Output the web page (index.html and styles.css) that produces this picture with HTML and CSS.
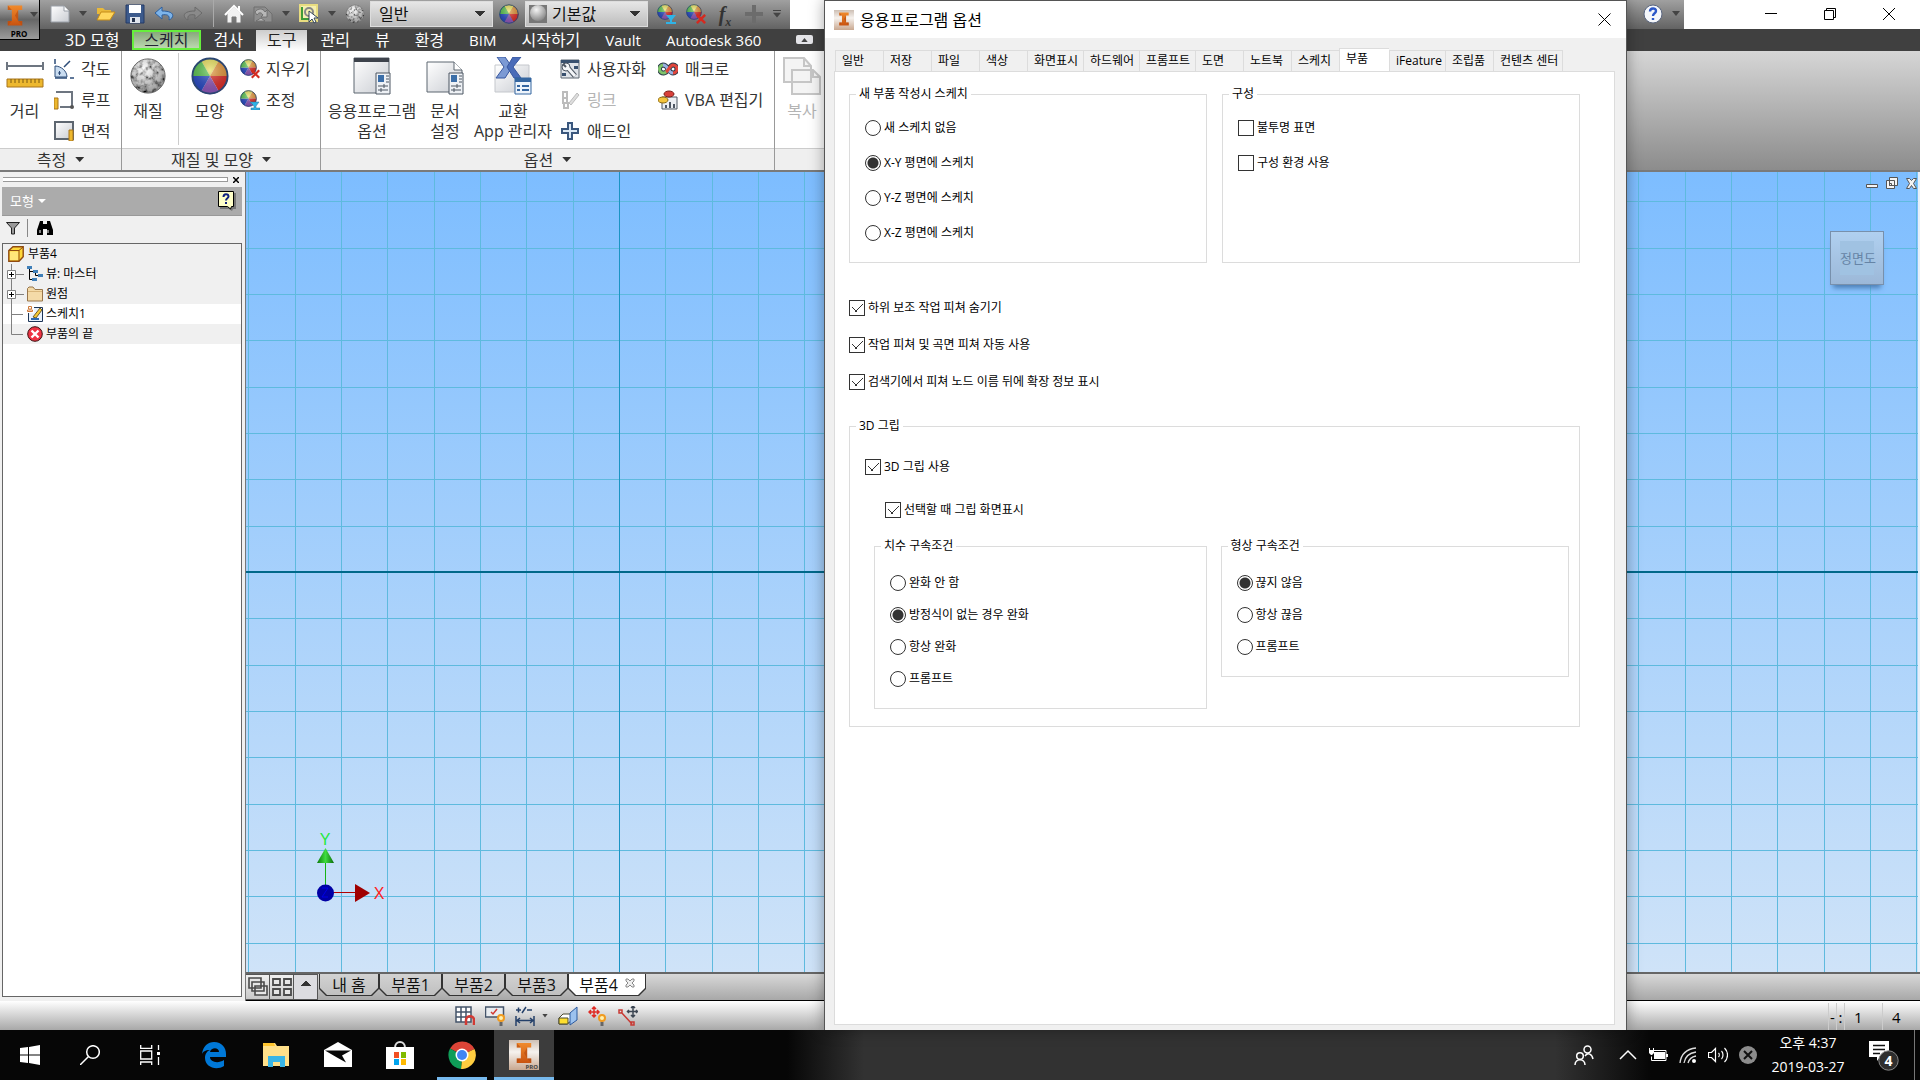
FILE: index.html
```html
<!DOCTYPE html>
<html lang="ko">
<head>
<meta charset="utf-8">
<title>응용프로그램 옵션</title>
<link rel="stylesheet" href="styles.css">
</head>
<body>
<svg class="defs" aria-hidden="true">
  <defs>
    <linearGradient id="page" x1="0" y1="0" x2="1" y2="1"><stop offset="0" stop-color="#fff"/><stop offset="1" stop-color="#c9ccd2"/></linearGradient>
    <linearGradient id="orange" x1="0" y1="0" x2="0" y2="1"><stop offset="0" stop-color="#f08a2c"/><stop offset="1" stop-color="#c9530f"/></linearGradient>
    <radialGradient id="gloss" cx="0.5" cy="0.35" r="0.65"><stop offset="0" stop-color="#fff" stop-opacity="0.35"/><stop offset="1" stop-color="#000" stop-opacity="0.12"/></radialGradient>
    <radialGradient id="ball" cx="0.4" cy="0.3" r="0.7"><stop offset="0" stop-color="#f4f4f4"/><stop offset="1" stop-color="#8a8a8a"/></radialGradient>
    <radialGradient id="shade" cx="0.4" cy="0.3" r="0.7"><stop offset="0" stop-color="#fff" stop-opacity="0.4"/><stop offset="1" stop-color="#000" stop-opacity="0.4"/></radialGradient>
    <linearGradient id="badge" x1="0" y1="0" x2="0" y2="1"><stop offset="0" stop-color="#cdbfb4"/><stop offset="0.4" stop-color="#f6f2ee"/><stop offset="1" stop-color="#c9a890"/></linearGradient>
    <linearGradient id="bevel" x1="0" y1="0" x2="1" y2="0"><stop offset="0" stop-color="#0a7a0a"/><stop offset="0.5" stop-color="#3fdc3f"/><stop offset="1" stop-color="#0a6a0a"/></linearGradient>
    <filter id="stone" x="0" y="0" width="1" height="1">
      <feTurbulence type="fractalNoise" baseFrequency="0.2" numOctaves="3" seed="4"/>
      <feColorMatrix values="2.4 0 0 0 -0.5  2.4 0 0 0 -0.5  2.4 0 0 0 -0.5  0 0 0 0 1"/>
      <feComposite in2="SourceGraphic" operator="in"/>
    </filter>
  </defs>
  <symbol id="wheel" viewBox="0 0 40 40">
    <path d="M20 20L10.500 3.500A19 19 0 0 1 29.500 3.500z" fill="#e8df5a"/>
    <path d="M20 20L29.500 3.500A19 19 0 0 1 39 20z" fill="#e29438"/>
    <path d="M20 20L39 20A19 19 0 0 1 29.500 36.500z" fill="#dc2a25"/>
    <path d="M20 20L29.500 36.500A19 19 0 0 1 10.500 36.500z" fill="#8d55b8"/>
    <path d="M20 20L10.500 36.500A19 19 0 0 1 1 20z" fill="#2648c4"/>
    <path d="M20 20L1 20A19 19 0 0 1 10.500 3.500z" fill="#58c14c"/>
    <circle cx="20" cy="20" r="18.500" fill="url(#gloss)" stroke="#2b4673" stroke-width="2"/>
  </symbol>
  <symbol id="rock" viewBox="0 0 40 40">
    <circle cx="20" cy="20" r="18" filter="url(#stone)"/>
    <circle cx="20" cy="20" r="18" fill="url(#shade)" stroke="#666"/>
  </symbol>
  <symbol id="ilogo" viewBox="0 0 20 24">
    <path d="M2 1H18V6H13.500V18H18V23H2V18H6.500V6H2z" fill="url(#orange)"/>
    <path d="M2 1l4.500 5H2zM18 23l-4.500-5H18zM13.500 6L10 12l3.500 6zM2 23l4.500-5H2z" fill="#b44a10" opacity="0.6"/>
  </symbol>
  <symbol id="cross" viewBox="0 0 12 12"><path d="M1 1L11 11M11 1L1 11" stroke="#d42a20" stroke-width="3"/></symbol>
</svg>

<main class="app">
  <header class="titlebar">
    <div class="quick">
      <button class="qi" aria-label="새로 만들기"><svg viewBox="0 0 20 20"><path d="M1 2h13l5 5v11H1z" fill="url(#page)" stroke="#9aa0a8"/><path d="M14 2v5h5" fill="#fff" stroke="#9aa0a8"/></svg></button>
      <button class="dd" aria-label="더 보기"></button>
      <button class="qi" aria-label="열기"><svg viewBox="0 0 20 20"><path d="M1 4h6l2 2h6v4H1z" fill="#e9b93a"/><path d="M1 16L5 8h14l-5 8z" fill="#ffd75e" stroke="#c58b16"/></svg></button>
      <button class="qi" aria-label="저장"><svg viewBox="0 0 20 20"><path d="M1 1h18v18H1z" fill="#3c5a8c" stroke="#243b66"/><path d="M4 1h12v8H4z" fill="#fff"/><path d="M5 13h10v6H5z" fill="#dfe4ec"/><path d="M7 14h3v4H7z" fill="#26334c"/></svg></button>
      <button class="qi" aria-label="실행 취소"><svg viewBox="0 0 20 20"><path d="M8 3L1 9l7 6v-4c5-1 8 0 7 5 5-2 7-9-7-9z" fill="#7db4ea" stroke="#2d5f9e"/></svg></button>
      <button class="qi" aria-label="다시 실행"><svg viewBox="0 0 20 20"><path d="M12 3l7 6-7 6v-4c-5-1-8 0-7 5-5-2-7-9 7-9z" fill="#8a8a8a" stroke="#6a6a6a"/></svg></button>
      <span class="qsep"></span>
      <button class="qi" aria-label="홈"><svg viewBox="0 0 20 20"><path d="M3 10v9h5v-6h4v6h5v-9l-7-7z" fill="#f2f2f2" stroke="#777"/><path d="M1 11l9-9 9 9M15 2v5" fill="none" stroke="#fff" stroke-width="2"/></svg></button>
      <button class="qi" aria-label="업데이트"><svg viewBox="0 0 20 20"><path d="M1 3h11l7 7v8H1z" fill="#8e8e8e" stroke="#6f6f6f"/><path d="M2 8c3-4 8-4 10 0l2-2v7H8l2-2c-2-3-4-3-6 0zM3 17l5-3 4 3z" fill="#b8b8b8" stroke="#666" stroke-width=".8"/></svg></button>
      <button class="dd" aria-label="더 보기"></button>
      <button class="qi" aria-label="선택"><svg viewBox="0 0 20 20"><path d="M1 1h17v16H1z" fill="#f5efb0" stroke="#e8dc80" stroke-width="2"/><path d="M3 3v12h12" fill="none" stroke="#3f9b38" stroke-width="2"/><circle cx="10" cy="8" r="4" fill="none" stroke="#888" stroke-width="2"/><path d="M10 7v11l3-3 2 4 2-1-2-4h4z" fill="#fff" stroke="#345"/></svg></button>
      <button class="dd" aria-label="더 보기"></button>
      <button class="qi" aria-label="재질"><svg><use href="#rock"/></svg></button>
    </div>
    <div class="quick quick-styles">
      <select class="combo" aria-label="재질"><option>일반</option></select>
      <button class="qi" aria-label="모양"><svg><use href="#wheel"/></svg></button>
      <div class="combo-wrap"><select class="combo combo-icon" aria-label="모양"><option>기본값</option></select><svg class="combo-ball" viewBox="0 0 18 18"><path d="M0 0h18v18H0z" fill="#777"/><circle cx="9" cy="8" r="8" fill="url(#ball)"/></svg></div>
    </div>
    <div class="quick quick-end">
      <button class="qi" aria-label="조정"><svg viewBox="0 0 20 20"><use href="#wheel" width="16" height="16"/><path d="M9 11h10l-4 5v2h4v2H9v-2h4v-2z" fill="#2fb3e6"/></svg></button>
      <button class="qi" aria-label="지우기"><svg viewBox="0 0 20 20"><use href="#wheel" width="16" height="16"/><use href="#cross" x="10" y="10" width="10" height="10"/></svg></button>
      <button class="qi fx" aria-label="매개변수">f<sub>x</sub></button>
      <button class="qi" aria-label="추가"><svg viewBox="0 0 20 20"><path d="M8 1h4v7h7v4h-7v7H8v-7H1V8h7z" fill="#6c6c6c"/></svg></button>
      <button class="dd dd-bar" aria-label="사용자화"></button>
    </div>
    <div class="help">
      <svg class="qi" viewBox="0 0 20 20"><circle cx="10" cy="10" r="9" fill="#f4f6fa" stroke="#5a6680"/><path d="M7 7.500c0-4 6-4 6-.5 0 2.500-3 2-3 5M10 14v2" fill="none" stroke="#2b57c8" stroke-width="2.400"/></svg>
      <span class="dd"></span>
    </div>
    <div class="win">
      <button aria-label="최소화"><svg viewBox="0 0 12 12"><path d="M0 5.500h12" stroke="#000"/></svg></button>
      <button aria-label="이전 크기로"><svg viewBox="0 0 12 12"><path d="M.5 2.500h9v9h-9zM2.500 2.500v-2h9v9h-2" fill="none" stroke="#000"/></svg></button>
      <button aria-label="닫기"><svg viewBox="0 0 12 12"><path d="M0 0l12 12M12 0L0 12" stroke="#000"/></svg></button>
    </div>
  </header>

  <button class="appmenu" aria-label="Inventor">
    <svg class="applogo"><use href="#ilogo"/></svg><span class="dd"></span><span class="pro">PRO</span>
  </button>

  <nav class="menu">
    <a href="#">3D 모형</a><a href="#" class="ctx">스케치</a><a href="#">검사</a><a href="#" class="on">도구</a><a href="#">관리</a><a href="#">뷰</a><a href="#">환경</a><a href="#" class="lat">BIM</a><a href="#">시작하기</a><a href="#" class="lat">Vault</a><a href="#" class="lat">Autodesk 360</a>
    <button class="fold" aria-label="리본 최소화"><svg viewBox="0 0 8 5"><path d="M0 5l4-5 4 5z" fill="#444"/></svg></button>
  </nav>

  <section class="ribbon">
    <div class="panel p-measure">
      <div class="tools">
        <button class="big"><svg viewBox="0 0 38 38"><path d="M1 9h36M1 5v8M37 5v8" stroke="#6d7580" stroke-width="2"/><path d="M1 22h36v8H1z" fill="#edb82e" stroke="#a8741a"/><path d="M5 22v4m4-4v4m4-4v4m4-4v4m4-4v4m4-4v4m4-4v4m4-4v4" stroke="#7d5a10"/></svg>거리</button>
        <div class="col">
          <button class="row"><svg viewBox="0 0 20 20"><path d="M1 7c6 0 12 5 12 11H1z" fill="#c9dcf0" stroke="#2d4c78"/><path d="M1 0v5M10 8l6-6M16 19h4M1 19h12" fill="none" stroke="#2d4c78" stroke-width="1.500"/><path d="M4 14h3M5.500 12v4" stroke="#2d4c78"/></svg>각도</button>
          <button class="row"><svg viewBox="0 0 20 20"><path d="M2 2h16v15H6" fill="none" stroke="#6d7580" stroke-width="2"/><path d="M0 8h4v11H0z" fill="#edb82e" stroke="#a8741a"/><circle cx="18" cy="17" r="2" fill="#555"/></svg>루프</button>
          <button class="row"><svg viewBox="0 0 20 20"><path d="M1 1h18v17H1z" fill="url(#page)" stroke="#5d6670" stroke-width="2"/><path d="M15 9h4v11h-4z" fill="#edb82e" stroke="#a8741a"/></svg>면적</button>
        </div>
      </div>
      <div class="foot">측정<i></i></div>
    </div>
    <div class="panel p-material">
      <div class="tools">
        <button class="big"><svg><use href="#rock"/></svg>재질</button>
        <span class="bar"></span>
        <button class="big"><svg><use href="#wheel"/></svg>모양</button>
        <div class="col">
          <button class="row"><svg viewBox="0 0 20 20"><use href="#wheel" width="17" height="17"/><use href="#cross" x="11" y="10" width="9" height="10"/></svg>지우기</button>
          <button class="row"><svg viewBox="0 0 20 20"><use href="#wheel" width="17" height="17"/><path d="M10 12h9l-3 4v2h4v2h-9v-2h3v-2z" fill="#2fb3e6" stroke="#2a6c94" stroke-width=".5"/></svg>조정</button>
        </div>
      </div>
      <div class="foot">재질 및 모양<i></i></div>
    </div>
    <div class="panel p-options">
      <div class="tools">
        <button class="big"><svg viewBox="0 0 38 38"><path d="M1 1h35v35H1z" fill="url(#page)" stroke="#5d6670"/><path d="M1 1h35v4H1z" fill="#3e434c"/><path d="M23 16h14v21H23z" fill="#eef1f5" stroke="#4d5662"/><path d="M25 18h6v7h-6z" fill="#3b6ea8"/><path d="M33 19h3m-3 3h3m-3 3h3M25 29h10m-10 4h10M31 27v4M28 31v4" stroke="#4d5662"/></svg>응용프로그램<br>옵션</button>
        <button class="big"><svg viewBox="0 0 38 38"><path d="M1 5h27l8 8v22H1z" fill="url(#page)" stroke="#5d6670"/><path d="M28 5v8h8" fill="#fff" stroke="#5d6670"/><path d="M23 16h14v21H23z" fill="#eef1f5" stroke="#4d5662"/><path d="M25 18h6v7h-6z" fill="#3b6ea8"/><path d="M33 19h3m-3 3h3m-3 3h3M25 29h10m-10 4h10M31 27v4M28 31v4" stroke="#4d5662"/></svg>문서<br>설정</button>
        <button class="big"><svg viewBox="0 0 38 38"><path d="M1 8h34v27H1z" fill="url(#page)" stroke="#c4c7cc"/><path d="M3 0h8l7 10-7 11H2l8-11z" fill="#7c9ad4" stroke="#3958a0"/><path d="M19 0h8l-8 10 8 11h-7l-7-11z" fill="#4a6cb8" stroke="#3958a0"/><path d="M21 21h16v16H21z" fill="#eef4fb" stroke="#3566a0"/><path d="M21 21h16v4H21z" fill="#3566a0"/><path d="M23 29h3m2 0h7M23 33h3m2 0h7" stroke="#3566a0" stroke-width="2"/></svg>교환<br>App 관리자</button>
        <div class="col">
          <button class="row"><svg viewBox="0 0 20 20"><path d="M1 1h18v18H1z" fill="#dfe3e8" stroke="#5d6670"/><path d="M1 1h18v3H1zM14 7h4v3h-4zM2 14h4v3H2z" fill="#38506e"/><path d="M7 8l8 9" stroke="#4d5662" stroke-width="5"/><circle cx="6" cy="8" r="4" fill="#f4f6f8" stroke="#4d5662"/><path d="M7 8l8 9" stroke="#f4f6f8" stroke-width="3"/><path d="M3 5l3 3" stroke="#4d5662" stroke-width="2"/></svg>사용자화</button>
          <button class="row off" disabled><svg viewBox="0 0 20 20"><path d="M3 2h4v6H3zM3 8h4v5H3zM4 13h4v5H4z" fill="none" stroke="#bcbcbc" stroke-width="2"/><path d="M9 13l8-10 2 2-8 10z" fill="#ddd" stroke="#bcbcbc"/></svg>링크</button>
          <button class="row"><svg viewBox="0 0 20 20"><path d="M8 2h4v6h6v4h-6v6H8v-6H2V8h6z" fill="#dce9f6" stroke="#3a577e" stroke-width="2"/></svg>애드인</button>
        </div>
        <div class="col">
          <button class="row"><svg viewBox="0 0 20 20"><path d="M5 6a4 4 0 1 0 1 8c4 0 5-8 9-8a4 4 0 1 1 0 8c-4 0-5-8-10-8z" fill="none" stroke="#2b3a4a" stroke-width="5"/><path d="M5 6a4 4 0 1 0 1 8c2 0 3-2 4-4" fill="none" stroke="#7fc36b" stroke-width="3"/><path d="M5 6c3 0 4 2 5 4s3 4 5 4" fill="none" stroke="#9ab0e0" stroke-width="3"/><path d="M8 13c3-2 4-7 7-7a4 4 0 1 1 0 8" fill="none" stroke="#e0453c" stroke-width="3"/></svg>매크로</button>
          <button class="row"><svg viewBox="0 0 20 20"><path d="M4 7h15v12H4z" fill="#eceff3" stroke="#4d5662"/><path d="M7 15h2v3H7zM11 12h2v6h-2zM15 14h2v4h-2z" fill="#4d5662"/><ellipse cx="11" cy="4" rx="5" ry="3" fill="#d8403a" stroke="#7c1d18"/><ellipse cx="5" cy="10" rx="5" ry="3" fill="#f3c43d" stroke="#8c6a12"/></svg>VBA 편집기</button>
        </div>
      </div>
      <div class="foot">옵션<i></i></div>
    </div>
    <div class="panel p-clip">
      <div class="tools">
        <button class="big off" disabled><svg viewBox="0 0 38 38"><path d="M1 1h20l7 8v16H1zM9 13h21l7 7v17H9z" fill="#f4f4f4" stroke="#c6c6c6" stroke-width="2"/><path d="M21 1v8h7M30 13v7h7" fill="none" stroke="#c6c6c6" stroke-width="2"/></svg>복사</button>
      </div>
      <div class="foot"></div>
    </div>
  </section>

  <div class="work">
    <aside class="browser">
      <div class="grip"><span></span><button aria-label="패널 닫기"><svg viewBox="0 0 6 6"><path d="M0 0l6 6M6 0L0 6" stroke="#000" stroke-width="1.500"/></svg></button></div>
      <div class="bhead"><button class="model">모형<i></i></button><svg class="bhelp" viewBox="0 0 18 20"><path d="M2 2h16v16h-3l-1 2-3-2H2z" fill="#777"/><path d="M.5 .5h15v15h-2l-1 2.500-3-2.500h-9z" fill="#ffffc8" stroke="#000"/><path d="M5.500 6c0-4 5-3.500 5-.5 0 2-2.500 1.500-2.500 4M8 11v2" fill="none" stroke="#102080" stroke-width="2"/></svg></div>
      <div class="btools"><svg viewBox="0 0 14 14"><path d="M.5 1.500h13L8.500 7v6h-3V7z" fill="#999" stroke="#222"/></svg><span></span><svg class="bino" viewBox="0 0 16 14"><path d="M3 0h3v3h4V0h3l3 9v5h-6V8H6v6H0V9z" fill="#000"/><path d="M3 9v3m8-3v3" stroke="#fff"/></svg></div>
      <ul class="tree">
        <li class="root"><svg class="ti" viewBox="0 0 16 16"><path d="M.8 4.500L5 .8h10.200v10L11 15.200H.8z" fill="#ffd83a" stroke="#8f4a10" stroke-width="1.400"/><path d="M2 5.500h8.500V14H2z" fill="#ffe779"/><path d="M1 4.500h10V15M11 4.500L15 1" fill="none" stroke="#8f4a10"/></svg>부품4</li>
        <li><svg class="tc" viewBox="0 0 16 20"><path d="M3.500 0v20M8 10.500h8" stroke="#808080"/><path d="M-.5 6.500h8v8h-8z" fill="#fff" stroke="#808080"/><path d="M1 10.500h5M3.500 8v5" stroke="#000"/></svg><svg class="ti" viewBox="0 0 16 16"><path d="M2.500 3v10.500H6M2.500 5.500H8M8.500 6v3.500h4" fill="none" stroke="#000"/><path d="M0 0h5v3H0zM6 4h5v3H6zM11 8h5v3h-5zM5 12h5v3H5z" fill="#3f7fb8"/></svg>뷰: 마스터</li>
        <li><svg class="tc" viewBox="0 0 16 20"><path d="M3.500 0v20M8 10.500h8" stroke="#808080"/><path d="M-.5 6.500h8v8h-8z" fill="#fff" stroke="#808080"/><path d="M1 10.500h5M3.500 8v5" stroke="#000"/></svg><svg class="ti" viewBox="0 0 16 16"><path d="M.5 15V2.500L2 1h4l2 2.500h7.500V15z" fill="#f4daa8" stroke="#97754a"/><path d="M1 5.500h14" stroke="#d9b67c"/></svg>원점</li>
        <li class="sel"><svg class="tc" viewBox="0 0 16 20"><path d="M3.500 0v20M4 10.500h11" stroke="#808080"/></svg><svg class="ti" viewBox="0 0 16 16"><path d="M1.500 1.500h14v14h-14z" fill="#e9f2fc" stroke="#1d3557"/><path d="M0 0h7v7H0z" fill="#fff"/><path d="M1.500 .5h3v2.500h-3zM.5 5.500h5V4h-5z" fill="#fff" stroke="#d07a3a"/><path d="M6 11l7-9 2 2-6 8z" fill="#f5c830" stroke="#6d5a2a"/><path d="M4 13h8" stroke="#2d6ab0" stroke-width="2"/></svg>스케치1</li>
        <li><svg class="tc" viewBox="0 0 16 20"><path d="M3.500 0v10.500H15" fill="none" stroke="#808080"/></svg><svg class="ti" viewBox="0 0 16 16"><circle cx="8" cy="8" r="7.300" fill="#ee3344" stroke="#3a1010"/><path d="M4.500 4.500l7 7m0-7l-7 7" stroke="#fff" stroke-width="2.400"/></svg>부품의 끝</li>
      </ul>
    </aside>
    <div class="stage">
      <div class="canvas">
        <span class="axis-v"></span><span class="axis-h"></span>
        <svg class="triad" viewBox="0 0 84 84"><path d="M12.500 68V36" stroke="#16b316"/><path d="M4 38L12.500 23 21 38z" fill="url(#bevel)"/><path d="M12 67.500h32" stroke="#b00000"/><path d="M42 59l15 9-15 9z" fill="#a00000"/><circle cx="12.500" cy="68" r="8.500" fill="#0000a4"/><path d="M9 63h6l-6 9h6" fill="none" stroke="#0000e6"/><text x="12" y="20" text-anchor="middle" class="axis-y">Y</text><text x="66" y="74" text-anchor="middle" class="axis-x">X</text></svg>
        <svg class="mdi" viewBox="0 0 52 14"><g fill="#f4f4f4" stroke="#555"><path d="M.5 7.500h11v3H.5zM23.500 .5h8v8h-8zM20.500 3.500h8v8h-8zM23.500 6.500h2v2h-2z"/><path d="M40.500 1.500h3l2 2 2-2h3l-3 5 3 5h-3l-2-3-2 3h-3l3-5z"/></g></svg>
        <div class="cube"><span>정면도</span></div>
      </div>
      <div class="docs">
        <button class="sq" aria-label="계단식 배열"><svg viewBox="0 0 20 20"><path d="M1 1h12v10H1zM4 5h12v9H4zM7 9h12v9H7z" fill="#e6e6e6" stroke="#4a4a4a" stroke-width="1.600"/></svg></button>
        <button class="sq" aria-label="바둑판식 배열"><svg viewBox="0 0 20 20"><path d="M1 2h7v6H1zM12 2h7v6h-7zM1 12h7v6H1zM12 12h7v6h-7z" fill="#e6e6e6" stroke="#4a4a4a" stroke-width="1.800"/></svg></button>
        <button class="sq up" aria-label="목록"></button>
        <a href="#" class="doc home">내 홈</a><a href="#" class="doc">부품1</a><a href="#" class="doc">부품2</a><a href="#" class="doc">부품3</a><a href="#" class="doc cur">부품4<svg viewBox="0 0 10 10"><path d="M1 1h2l2 2 2-2h2v2L7 5l2 2v2H7L5 7 3 9H1V7l2-2-2-2z" fill="#eee" stroke="#888"/></svg></a>
      </div>
    </div>
  </div>

  <footer class="status">
    <div class="snap">
      <svg viewBox="0 0 20 20"><path d="M1 1h15v15H1zM6 1v15M11 1v15M1 6h15M1 11h15" fill="#fff" stroke="#44546a" stroke-width="1.500"/><path d="M11 19v-5c0-5 8-5 8 0v5" fill="none" stroke="#d23a34" stroke-width="2.500"/></svg>
      <svg viewBox="0 0 20 20"><path d="M.5 1h18v10H.5z" fill="#e8ecf0" stroke="#44546a" stroke-width="1.500"/><path d="M6 6l2 2 4-5" fill="none" stroke="#d23a34" stroke-width="1.500"/><circle cx="16" cy="12" r="3" fill="#fff2b0" stroke="#f09a20" stroke-width="2"/><path d="M16 16v4" stroke="#666" stroke-width="3"/></svg>
      <svg viewBox="0 0 20 20"><path d="M1 4h5M3.500 1.500v5M7 7l4-6M12 4h5M1 10v10M19 10v10M2 14.500h16M5 12l-3 2.500L5 17M15 12l3 2.500-3 2.500" fill="none" stroke="#24406a" stroke-width="1.500"/></svg>
      <span class="dd"></span>
      <svg viewBox="0 0 20 20"><path d="M1 12l4-4h8v7l-4 3H1z" fill="#fff" stroke="#4a4a30"/><path d="M1 12h9v6H1z" fill="#ffdf2e" stroke="#4a4a30"/><path d="M12 7l7-6v13l-7 5z" fill="#9cc2ee" stroke="#2d5a9e"/></svg>
      <svg viewBox="0 0 20 20"><path d="M6 1v10M1 6h10M4 3l2-2 2 2M4 9l2 2 2-2M3 4L1 6l2 2M9 4l2 2-2 2" fill="none" stroke="#e02a24" stroke-width="1.500"/><circle cx="14" cy="12" r="3" fill="#fff2b0" stroke="#f09a20" stroke-width="2"/><path d="M14 16v4" stroke="#666" stroke-width="3"/></svg>
      <svg viewBox="0 0 20 20"><path d="M3 6l11 12M1 4h3v3H1zM13 16h3v3h-3z" fill="none" stroke="#c83a34" stroke-width="1.500"/><path d="M15 0v11M9.500 5.500h10M13 2l2-2 2 2M13 9l2 2 2-2M11 4L9.500 5.500 11 7M18 4l1.500 1.500L18 7" fill="none" stroke="#3c4652" stroke-width="1.500"/></svg>
    </div>
    <div class="cells"><span>-</span><span>:</span><span class="c1">1</span><span class="c2">4</span></div>
  </footer>

  <section class="dialog" role="dialog" aria-labelledby="dlg-title">
    <header class="dtitle"><svg class="dlogo" viewBox="0 0 20 20"><path d="M0 0h20v20H0z" fill="url(#badge)"/><use href="#ilogo" x="4" y="2" width="12" height="14"/></svg><h1 id="dlg-title">응용프로그램 옵션</h1><button class="dclose" aria-label="닫기"><svg viewBox="0 0 13 13"><path d="M.5 .5l12 12M12.500 .5l-12 12" stroke="#000"/></svg></button></header>
    <div class="dbody">
      <div class="tabs" role="tablist">
        <button class="w48">일반</button><button class="w48">저장</button><button class="w48">파일</button><button class="w48">색상</button><button class="w56">화면표시</button><button class="w56">하드웨어</button><button class="w56">프롬프트</button><button class="w48">도면</button><button class="w48">노트북</button><button class="w48">스케치</button><button class="w50 active">부품</button><button class="w56">iFeature</button><button class="w48">조립품</button><button class="w70">컨텐츠 센터</button>
      </div>
      <div class="pane">
        <div class="two">
          <fieldset>
            <legend>새 부품 작성시 스케치</legend>
            <div class="opts wide">
              <label><input type="radio" name="plane">새 스케치 없음</label>
              <label><input type="radio" name="plane" checked>X-Y 평면에 스케치</label>
              <label><input type="radio" name="plane">Y-Z 평면에 스케치</label>
              <label><input type="radio" name="plane">X-Z 평면에 스케치</label>
            </div>
          </fieldset>
          <fieldset>
            <legend>구성</legend>
            <div class="opts wide">
              <label><input type="checkbox">불투명 표면</label>
              <label><input type="checkbox">구성 환경 사용</label>
            </div>
          </fieldset>
        </div>
        <div class="checks">
          <label><input type="checkbox" checked>하위 보조 작업 피쳐 숨기기</label>
          <label><input type="checkbox" checked>작업 피쳐 및 곡면 피쳐 자동 사용</label>
          <label><input type="checkbox" checked>검색기에서 피쳐 노드 이름 뒤에 확장 정보 표시</label>
        </div>
        <fieldset class="grips">
          <legend>3D 그립</legend>
          <div class="gripchecks">
            <label><input type="checkbox" checked>3D 그립 사용</label>
            <label class="indent"><input type="checkbox" checked>선택할 때 그립 화면표시</label>
          </div>
          <div class="inner">
            <fieldset>
              <legend>치수 구속조건</legend>
              <div class="opts">
                <label><input type="radio" name="dim">완화 안 함</label>
                <label><input type="radio" name="dim" checked>방정식이 없는 경우 완화</label>
                <label><input type="radio" name="dim">항상 완화</label>
                <label><input type="radio" name="dim">프롬프트</label>
              </div>
            </fieldset>
            <fieldset>
              <legend>형상 구속조건</legend>
              <div class="opts">
                <label><input type="radio" name="geo" checked>끊지 않음</label>
                <label><input type="radio" name="geo">항상 끊음</label>
                <label><input type="radio" name="geo">프롬프트</label>
              </div>
            </fieldset>
          </div>
        </fieldset>
      </div>
    </div>
  </section>
</main>

<footer class="taskbar">
  <div class="pins">
    <button aria-label="시작"><svg viewBox="0 0 20 20"><path d="M0 3l8-1v7.500H0zM9 2l11-2v9.500H9zM0 10.500h8V18l-8-1zM9 10.500h11V20L9 18z" fill="#fff"/></svg></button>
    <button aria-label="검색"><svg viewBox="0 0 20 20"><circle cx="13" cy="7" r="6.300" fill="none" stroke="#fff" stroke-width="1.500"/><path d="M8.500 11.500L0 20" stroke="#fff" stroke-width="1.500"/></svg></button>
    <button aria-label="작업 보기"><svg viewBox="0 0 20 20"><path d="M.7 0v3.300h11V0M.7 20v-3h11v3M.7 6h11v8H.7zM18.500 0v5M18.500 12v8" fill="none" stroke="#fff" stroke-width="1.300"/><path d="M17 7h3v3h-3z" fill="#fff"/></svg></button>
    <span class="gap"></span>
    <button aria-label="Edge"><svg class="w28" viewBox="0 0 28 28"><path d="M2 13C3 5 8 1 14 1c8 0 12 6 12 12v3H10c0 5 8 7 14 3v6c-8 5-19 1-19-8 0-4 2-7 5-8-5 0-7 2-8 4zM10 11h9c0-5-8-5-9 0z" fill="#0078d7" fill-rule="evenodd"/></svg></button>
    <button aria-label="파일 탐색기"><svg class="w28" viewBox="0 0 28 28"><path d="M1 3c0-1 0-1 1-1h11l2 3h12v20H1z" fill="#ffe08a"/><path d="M1 5V2h11l1 3z" fill="#ffc52e"/><path d="M6 26V15h17v11h-5v-5h-7v5z" fill="#39b5e6"/></svg></button>
    <button aria-label="메일"><svg class="w28" viewBox="0 0 28 28"><path d="M0 9L14 1l14 8v17H0z" fill="#fff"/><path d="M1 9.500h26l-9 5 4 7-9-5z" fill="#060606"/></svg></button>
    <button aria-label="스토어"><svg class="w28" viewBox="0 0 28 28"><path d="M9 7c0-8 10-8 10 0" fill="none" stroke="#ddd" stroke-width="2"/><path d="M0 6h28v22H0z" fill="#fff"/><path d="M8 11h5v6H8z" fill="#f25022"/><path d="M15 11h5v6h-5z" fill="#7fba00"/><path d="M8 18h5v6H8z" fill="#00a4ef"/><path d="M15 18h5v6h-5z" fill="#ffb900"/></svg></button>
    <button class="run" aria-label="Chrome"><svg class="w28" viewBox="0 0 28 28"><path d="M14 14L2 7.500A14 14 0 0 1 26.500 8z" fill="#db4437"/><path d="M14 14l12.500-6A14 14 0 0 1 13 28z" fill="#ffcd40"/><path d="M14 14l-1 14A14 14 0 0 1 2 7.500z" fill="#0f9d58"/><circle cx="14" cy="14" r="6.500" fill="#fff"/><circle cx="14" cy="14" r="5" fill="#4285f4"/></svg></button>
    <button class="run front" aria-label="Inventor"><svg class="w30" viewBox="0 0 30 30"><path d="M0 0h30v30H0z" fill="url(#badge)"/><use href="#ilogo" x="6" y="2" width="18" height="22"/><text x="29" y="29" text-anchor="end" class="protext">PRO</text></svg></button>
  </div>
  <div class="tray">
    <button class="people" aria-label="피플"><svg viewBox="0 0 20 20"><g fill="none" stroke="#fff" stroke-width="1.500"><circle cx="13.500" cy="4.500" r="3.500"/><circle cx="6" cy="11" r="3.300"/><path d="M1 20c0-7 10-7 10 0M11 11c3-4 7-2 8 3"/></g></svg></button>
    <button aria-label="숨겨진 아이콘"><svg viewBox="0 0 20 20"><path d="M2 14l8-8 8 8" fill="none" stroke="#fff" stroke-width="1.500"/></svg></button>
    <button aria-label="배터리"><svg viewBox="0 0 20 20"><path d="M5 5.500h13v10H3.500v-4" fill="none" stroke="#fff"/><path d="M6 7h11v7H6zM18 9h2v3h-2zM1 5h5v3L4 10H3L1 8zM1 3h1v2H1zM5 3h1v2H5z" fill="#fff"/></svg></button>
    <button aria-label="네트워크"><svg viewBox="0 0 20 20"><g fill="none" stroke="#ddd" stroke-width="1.300"><path d="M2 18C3 9 9 4 18 3M6 18c1-6 5-10 12-11M10 18c1-4 3-6 8-7"/></g><circle cx="16" cy="16" r="2" fill="#fff"/></svg></button>
    <button aria-label="볼륨"><svg viewBox="0 0 20 20"><path d="M.5 7.500h3l4-4v13l-4-4h-3zM10.500 8c1 1 1 3 0 4M13.500 6c2 2 2 6 0 8M16.500 3c4 4 4 10 0 14" fill="none" stroke="#fff" stroke-width="1.200"/></svg></button>
    <button aria-label="알림 상태"><svg viewBox="0 0 20 20"><circle cx="10" cy="10" r="9" fill="#8c8c8c"/><path d="M6 6l8 8m0-8l-8 8" stroke="#111" stroke-width="2"/></svg></button>
    <div class="clock"><span>오후 4:37</span><span>2019-03-27</span></div>
    <button class="note" aria-label="알림 센터"><svg viewBox="0 0 32 32"><path d="M1 2h20v16H12l-3 4v-4H1z" fill="#fff"/><path d="M5 6.500h12M5 10.500h12M5 14.500h7" stroke="#111" stroke-width="1.300"/><circle cx="20.500" cy="21.500" r="9.700" fill="#2e2e2e" stroke="#888"/><text x="20.500" y="27" text-anchor="middle" class="count">4</text></svg></button>
    <span class="peek"></span>
  </div>
</footer>
</body>
</html>
```
FILE: styles.css
```css
* { box-sizing: border-box; }
html, body { margin: 0; }
body {
  display: flex;
  flex-direction: column;
  min-height: 100vh;
  overflow: hidden;
  background: #f0f0f0;
  color: #000;
  font: 12px/16px "Open Sans", "Noto Sans CJK KR", sans-serif;
}
button {
  padding: 0;
  border: 0;
  background: none;
  color: inherit;
  font: inherit;
}
a { color: inherit; text-decoration: none; }
svg { display: block; flex: none; }
.defs { position: absolute; width: 0; height: 0; }

.app {
  position: relative;
  flex: 1;
  display: flex;
  flex-direction: column;
}

/* title bar and quick access */
.titlebar {
  display: flex;
  height: 29px;
  background: #fff;
}
.quick {
  display: flex;
  align-items: center;
  gap: 9px;
  width: 370px;
  padding: 0 0 2px 50px;
  background: linear-gradient(#a0a0a0, #6f6f6f 80%, #636363);
}
.quick-styles { width: 278px; padding: 0 0 2px; gap: 6px; }
.quick-end { width: 142px; padding-left: 9px; }
.qi { flex: none; width: 20px; height: 20px; }
.qi svg { width: 20px; height: 20px; }
.dd {
  flex: none;
  width: 8px;
  height: 5px;
  background: #444;
  clip-path: polygon(0 0, 100% 0, 50% 100%);
}
.dd-bar { height: 8px; clip-path: polygon(0 0, 100% 0, 100% 20%, 0 20%, 0 40%, 100% 40%, 50% 100%, 0 40%); }
.qsep { width: 1px; height: 27px; margin: 0 1px; background: #aaa; }
.fx { font: italic bold 20px/20px "Liberation Serif", serif; color: #333; }
.fx sub { font-size: 12px; line-height: 0; }
.combo-wrap { display: grid; }
.combo-wrap > * { grid-area: 1 / 1; }
.combo {
  appearance: none;
  width: 123px;
  height: 26px;
  padding: 0 8px;
  border: 1px solid #ddd;
  border-radius: 0;
  background:
    conic-gradient(from -40deg at 50% 100%, #333 80deg, transparent 0) right 7px center / 10px 6px no-repeat,
    linear-gradient(#e6e6e6, #bdbdbd);
  color: #111;
  font: 16px/22px "Open Sans", "Noto Sans CJK KR", sans-serif;
}
.combo-icon { padding-left: 26px; }
.combo-ball { width: 18px; height: 18px; margin: 4px; }
.help {
  display: flex;
  align-items: center;
  gap: 9px;
  margin-left: auto;
  padding: 0 4px 2px 33px;
  background: linear-gradient(#a0a0a0, #6f6f6f 80%, #636363);
}
.win {
  display: flex;
  justify-content: flex-end;
  width: 236px;
  padding: 0 2px 2px 0;
}
.win button { display: grid; place-items: center; width: 59px; }
.win svg { width: 12px; height: 12px; }

.appmenu {
  position: absolute;
  z-index: 1;
  top: 0;
  left: 0;
  display: grid;
  grid-template-columns: 30px 8px;
  align-content: start;
  align-items: center;
  width: 40px;
  height: 40px;
  border: 1px solid #000;
  border-width: 0 1px 1px 0;
  background: linear-gradient(#c4c4c4, #666 50%, #9c9c9c);
}
.applogo { width: 18px; height: 27px; margin: 2px 6px 0; }
.pro { grid-column: 1 / 3; font-size: 8px; font-weight: 700; line-height: 9px; }

/* menu tabs */
.menu {
  display: flex;
  gap: 1px;
  height: 22px;
  padding-left: 53px;
  background: #404040;
  color: #fff;
  font-size: 16px;
  line-height: 22px;
}
.menu a { padding: 0 12px; white-space: nowrap; }
.menu .lat { font-size: 15px; }
.menu .ctx {
  margin: 1px 0;
  border: 2px solid #66ef3c;
  padding: 0 10px;
  background: linear-gradient(#88a87c, #bcd8b0);
  color: #223;
  line-height: 16px;
}
.menu .on { margin-top: 1px; padding: 0 11px; background: linear-gradient(#ccc, #fff); color: #222; line-height: 20px; }
.fold {
  display: grid;
  place-items: center;
  width: 17px;
  height: 9px;
  margin: 6px 0 0 22px;
  border-radius: 2px;
  background: #e4e4e8;
}
.fold svg { width: 7px; height: 4px; }

/* ribbon */
.ribbon {
  display: flex;
  height: 121px;
  border-bottom: 2px solid #7a7a7a;
  background: linear-gradient(#d6d6d6, #8c8c8c);
  color: #333;
  font-size: 16px;
  line-height: 20px;
}
.panel {
  display: flex;
  flex-direction: column;
  border-right: 1px solid #999;
  background: #fff;
}
.p-measure { width: 122px; }
.p-material { width: 199px; }
.p-options { width: 454px; }
.p-clip { width: 68px; }
.tools { flex: 1; display: grid; align-items: start; padding-top: 2px; }
.p-measure .tools { grid-template-columns: 49px 1fr; }
.p-material .tools { grid-template-columns: 52px 5px 61px 1fr; }
.p-options .tools { grid-template-columns: 102px 44px 92px 98px 1fr; }
.p-clip .tools { grid-template-columns: 54px; }
.big {
  display: flex;
  flex-direction: column;
  align-items: center;
  white-space: nowrap;
  justify-self: center;
}
.big svg { width: 38px; height: 38px; margin: 4px 0 6px; }
.col { padding-left: 5px; }
.p-material .col { padding-left: 0; }
.p-options .col { padding-left: 1px; }
.row {
  display: flex;
  align-items: center;
  gap: 7px;
  height: 31px;
  white-space: nowrap;
}
.p-material .row { gap: 6px; }
.row svg { width: 20px; height: 20px; }
.off { color: #b4b4b4; }
.bar { justify-self: end; width: 1px; height: 92px; background: #ccc; }
.foot {
  display: flex;
  align-items: center;
  justify-content: center;
  gap: 9px;
  height: 22px;
  border-top: 1px solid #ccc;
  background: #efefef;
}
.foot i { width: 9px; height: 5px; background: #333; clip-path: polygon(0 0, 100% 0, 50% 100%); }

/* browser panel */
.work { flex: 1; display: flex; }
.browser { display: flex; flex-direction: column; width: 245px; padding: 0 3px 4px 2px; background: #f0f0f0; }
.grip { display: flex; align-items: center; gap: 5px; height: 15px; padding-left: 1px; }
.grip span { width: 225px; height: 5px; border: 1px solid #999; border-left: 0; background: #fff; }
.grip svg { width: 6px; height: 6px; }
.bhead {
  display: flex;
  align-items: center;
  justify-content: space-between;
  height: 29px;
  padding: 0 6px 0 8px;
  border-bottom: 1px solid #999;
  background: #ababab;
  color: #fff;
}
.model { display: flex; align-items: center; gap: 4px; font-size: 13px; }
.model i { width: 8px; height: 4px; background: #fff; clip-path: polygon(0 0, 100% 0, 50% 100%); }
.bhelp { width: 18px; height: 20px; }
.btools { display: flex; align-items: center; gap: 7px; height: 27px; padding: 0 0 4px 4px; }
.btools svg { width: 14px; height: 14px; }
.btools span { width: 1px; height: 18px; background: #888; }
.btools .bino { width: 16px; margin-left: 2px; }
.tree {
  flex: 1;
  margin: 0;
  padding: 0;
  border: 1px solid #666;
  background: #fff;
  list-style: none;
}
.tree li { display: flex; align-items: center; gap: 3px; height: 20px; padding-left: 5px; background: #f0f0f0; }
.tree .root { gap: 4px; }
.tree .sel { background: #fff; }
.ti { width: 16px; height: 16px; }
.tc { width: 16px; height: 20px; overflow: visible; }

/* drawing area */
.stage { flex: 1; display: flex; flex-direction: column; border-left: 1px solid #777; }
.canvas {
  position: relative;
  flex: 1;
  border-right: 2px solid #e8f0f8;
  background:
    linear-gradient(90deg, #5ebade 1px, transparent 1px 46px, #5ebade 46px 47px, transparent 47px 93px, #5ebade 93px 94px, transparent 94px) 95px 0 / 139px 139px,
    linear-gradient(#5ebade 1px, transparent 1px 46px, #5ebade 46px 47px, transparent 47px 93px, #5ebade 93px 94px, transparent 94px) 0 122px / 139px 139px,
    linear-gradient(#7dbdff, #cfe3f8);
}
.axis-v { position: absolute; top: 0; bottom: 0; left: 373px; width: 1px; background: #1a94c4; }
.axis-h { position: absolute; top: 399px; left: 0; right: 0; height: 2px; background: #00688a; }
.triad { position: absolute; left: 67px; bottom: 63px; width: 84px; height: 84px; }
.axis-y { fill: #1fe83c; font: 16px "Liberation Sans", sans-serif; }
.axis-x { fill: #ff2020; font: 16px "Liberation Sans", sans-serif; }
.mdi { position: absolute; top: 5px; right: 0; width: 52px; height: 14px; }
.cube {
  position: absolute;
  top: 59px;
  right: 34px;
  display: grid;
  place-items: center;
  width: 54px;
  height: 54px;
  border: 1px solid #7890ac;
  background: linear-gradient(#b0d0f0, #9cb8d8);
  box-shadow: 0 6px 5px -3px #4c7eb4;
  color: #6684a6;
}
.cube span { width: 34px; height: 34px; display: grid; place-items: center; background: #a0c2e2; font-size: 13px; white-space: nowrap; }
.docs {
  display: flex;
  height: 29px;
  border-top: 2px solid #666;
  border-bottom: 1px solid #000;
  background: linear-gradient(#d8d8d8, #a8a8a8);
  color: #111;
  font-size: 16px;
}
.sq { width: 24px; border: 1px solid #555; border-left: 0; background: linear-gradient(#f0f0f0, #c8c8c8); }
.sq svg { width: 20px; height: 20px; margin: auto; }
.up { margin-right: 1px; background: conic-gradient(from 140deg at 50% 0, #333 80deg, transparent 0) center 5px / 12px 6px no-repeat, #dcdce0; }
.doc {
  position: relative;
  z-index: 0;
  display: flex;
  align-items: center;
  justify-content: center;
  gap: 7px;
  width: 63px;
  height: 22px;
  background: #333;
  clip-path: polygon(0 0, 100% 0, 100% 15px, calc(100% - 7px) 100%, 7px 100%, 0 15px);
  white-space: nowrap;
}
.doc::before {
  content: "";
  position: absolute;
  z-index: -1;
  inset: 0 1px 1px;
  background: linear-gradient(#d2d2d2, #c0c0c0);
  clip-path: polygon(0 0, 100% 0, 100% 14px, calc(100% - 7px) 100%, 7px 100%, 0 14px);
}
.home { width: 60px; }
.cur { width: 78px; }
.cur::before { background: #fff; }
.doc svg { width: 10px; height: 10px; margin-bottom: 4px; }

.status {
  display: flex;
  justify-content: space-between;
  height: 29px;
  background: linear-gradient(#fff, #a8a8a8);
}
.snap { display: flex; align-items: center; gap: 10px; padding-left: 455px; }
.snap svg { width: 20px; height: 20px; }
.snap .dd { width: 6px; height: 4px; margin: 0 0 0 -3px; }
.cells { display: flex; padding-top: 2px; line-height: 28px; font-size: 15px; }
.cells span { width: 8px; overflow: hidden; border-left: 1px solid #ccc; text-align: center; }
.cells .c1 { width: 38px; padding-left: 9px; text-align: left; }
.cells .c2 { width: 38px; padding-left: 9px; text-align: left; }

/* options dialog */
.dialog {
  position: absolute;
  z-index: 2;
  top: 0;
  bottom: 0;
  left: 824px;
  display: flex;
  flex-direction: column;
  width: 803px;
  border: 1px solid #555;
  border-bottom: 0;
  background: #f0f0f0;
  box-shadow: 0 0 14px #00000059;
}
.dtitle { display: flex; align-items: center; gap: 6px; height: 37px; padding: 0 15px 0 9px; background: #fff; }
.dlogo { width: 20px; height: 20px; }
.dtitle h1 { flex: 1; margin: 0; font-size: 16px; font-weight: 400; line-height: 20px; }
.dclose svg { width: 13px; height: 13px; }
.dbody { flex: 1; display: flex; flex-direction: column; padding: 10px 11px 5px 9px; }
.tabs { display: flex; align-items: flex-end; height: 24px; margin-bottom: -1px; padding-left: 1px; }
.tabs button {
  height: 22px;
  padding-left: 6px;
  border: 1px solid #dcdcdc;
  border-right: 0;
  text-align: left;
  white-space: nowrap;
}
.tabs .w48 { width: 48px; }
.tabs .w50 { width: 50px; }
.tabs .w56 { width: 56px; }
.tabs .w70 { width: 70px; border-right: 1px solid #dcdcdc; }
.tabs .active { height: 24px; padding-bottom: 3px; border-bottom: 0; background: #fff; }
.pane {
  flex: 1;
  padding: 14px 34px 0 14px;
  border: 1px solid #dcdcdc;
  background: #fff;
}
fieldset { min-width: 0; margin: 0; padding: 0 15px; border: 1px solid #dcdcdc; }
legend { margin-left: -9px; padding: 0 3px; line-height: 16px; }
label { display: flex; align-items: center; gap: 3px; height: 16px; white-space: nowrap; }
input { appearance: none; flex: none; width: 16px; height: 16px; margin: 0; border: 1px solid #333; background: #fff; }
input[type="radio"] { border-radius: 50%; }
input[type="radio"]:checked { background: radial-gradient(circle, #333 5px, #fff 6px); }
input[type="checkbox"]:checked {
  background:
    linear-gradient(45deg, transparent 42%, #333 42% 58%, transparent 58%) 2px 6px / 5px 5px no-repeat,
    linear-gradient(-45deg, transparent 44%, #333 44% 56%, transparent 56%) 5px 3px / 8px 8px no-repeat,
    #fff;
}
.two { display: grid; grid-template-columns: 1fr 1fr; gap: 15px; }
.opts { display: flex; flex-direction: column; gap: 16px; padding: 21px 0 21px; }
.wide { gap: 19px; padding: 18px 0 21px; }
.checks { display: flex; flex-direction: column; gap: 21px; margin: 37px 0 28px; }
.gripchecks { display: flex; flex-direction: column; gap: 27px; padding: 25px 0 20px; }
.indent { margin-left: 20px; }
.grips { padding: 0 10px 17px 15px; }
.inner { display: grid; grid-template-columns: 333fr 349fr; align-items: start; gap: 14px; margin-left: 9px; }

/* taskbar */
.taskbar {
  display: flex;
  justify-content: space-between;
  height: 50px;
  background: linear-gradient(90deg, #060606 41%, #323232 45%, #323232 81%, #060606 86%);
  color: #fff;
}
.pins, .tray { display: flex; }
.pins { gap: 2px; }
.pins button { display: grid; place-items: center; width: 60px; }
.pins button:nth-child(-n+3) { margin-right: -2px; }
.pins svg { width: 20px; height: 20px; }
.pins .w28 { width: 28px; height: 28px; }
.pins .w30 { width: 30px; height: 30px; }
.gap { width: 2px; }
.run { background: linear-gradient(#76b9ed, #76b9ed) center bottom / 50px 3px no-repeat; }
.front { background: linear-gradient(#76b9ed, #76b9ed) center bottom / 60px 3px no-repeat, #3c3c3c; }
.protext { fill: #444; font: bold 6px "Open Sans", sans-serif; }
.tray button { display: grid; place-items: center; width: 30px; }
.tray svg { width: 20px; height: 20px; }
.tray .people { width: 40px; margin-right: 9px; }
.clock { display: flex; flex-direction: column; justify-content: center; width: 90px; font-size: 14px; line-height: 24px; text-align: center; }
.tray .note { width: 61px; }
.tray .note svg { width: 32px; height: 32px; }
.count { font: bold 14px "Open Sans", sans-serif; fill: #fff; }
.peek { width: 6px; border-left: 1px solid #777; }
```
